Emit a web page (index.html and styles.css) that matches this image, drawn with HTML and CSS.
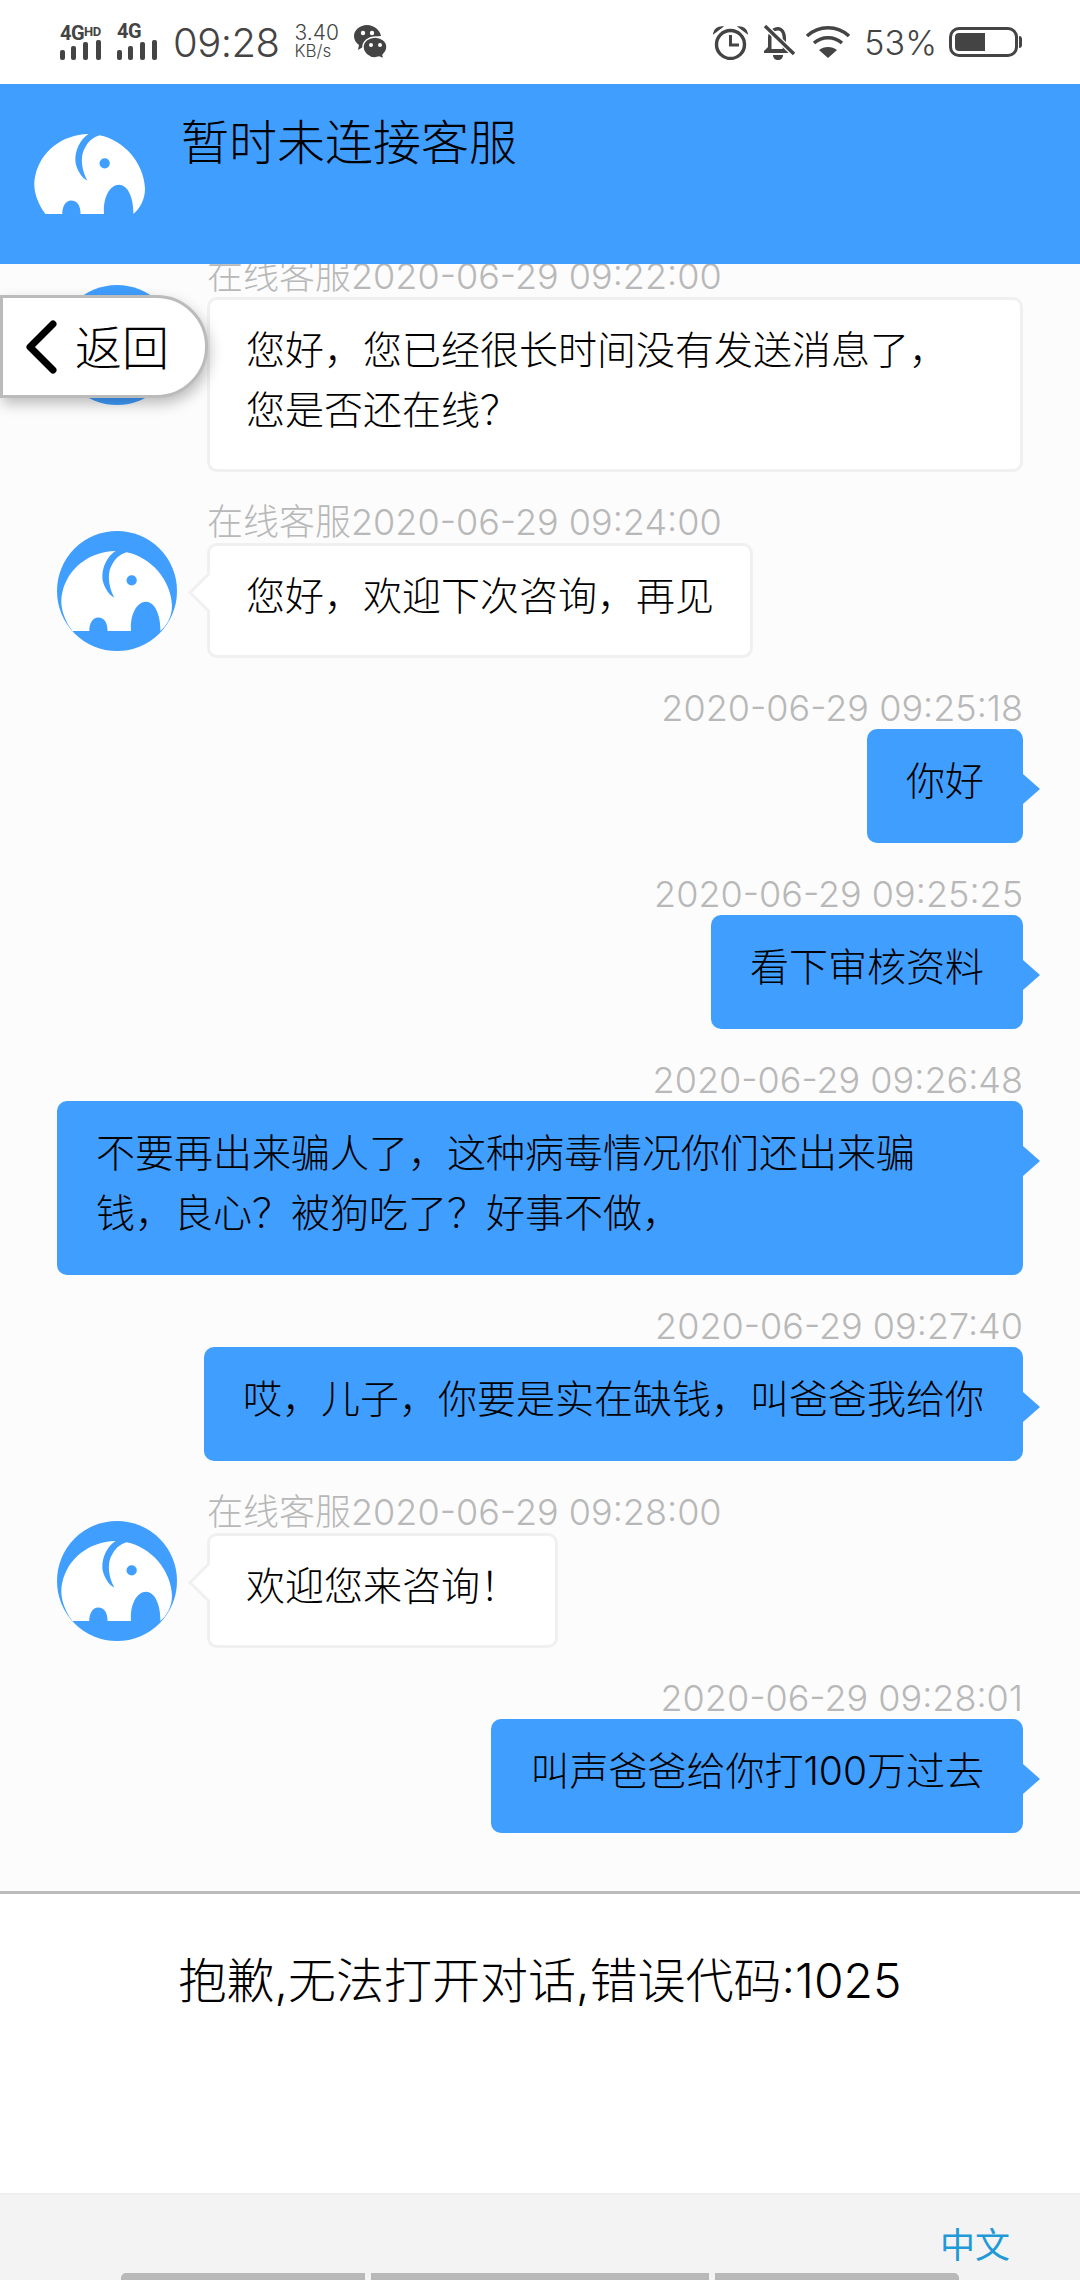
FILE: index.html
```html
<!DOCTYPE html>
<html lang="zh-CN">
<head>
  <meta charset="UTF-8" />
  <meta name="viewport" content="width=device-width, initial-scale=1.0"/>
  <title>暂时未连接客服</title>
  <link rel="stylesheet" href="styles.css">
</head>
<body>
  <svg class="defs" width="0" height="0">
    <symbol id="elephant" viewBox="100 403 322 237" preserveAspectRatio="none">
      <path fill-rule="evenodd" d="M133 640C105 600 95 560 104 525C120 455 180 405 258 403C225 425 215 470 222 495C228 515 240 535 255 541C240 515 230 470 250 440C262 420 275 412 290 407C360 420 420 490 422 565C422 600 405 625 388 640C390 600 375 553 347 553C320 553 300 590 303 640L235 640C235 615 225 600 208 600C190 600 182 620 182 640ZM305 475A15 15 0 1 0 305 505A15 15 0 1 0 305 475Z"/>
    </symbol>
    <symbol id="avatar" viewBox="0 0 120 120">
      <circle cx="60" cy="60" r="60" fill="#409eff"/>
      <clipPath id="avatar-clip"><circle cx="60" cy="60" r="60"/></clipPath>
      <g clip-path="url(#avatar-clip)">
        <use href="#elephant" x="4" y="20" width="111" height="80" fill="#fff"/>
      </g>
    </symbol>
  </svg>

  <!-- Status bar -->
  <div class="statusbar">
    <div class="status-left">
      <div class="signal">
        <div class="net">4G<span class="hd">HD</span></div>
        <svg class="bars" width="42" height="20" viewBox="0 0 42 20" fill="#444"><rect x="0" y="10" width="5" height="10" rx="2"/><rect x="11" y="6" width="5" height="14" rx="2"/><rect x="23" y="2" width="5" height="18" rx="2"/><rect x="36" y="0" width="5" height="20" rx="2"/></svg>
      </div>
      <div class="signal signal-two">
        <div class="net">4G</div>
        <svg class="bars" width="42" height="20" viewBox="0 0 42 20" fill="#444"><rect x="0" y="10" width="5" height="10" rx="2"/><rect x="11" y="6" width="5" height="14" rx="2"/><rect x="23" y="2" width="5" height="18" rx="2"/><rect x="35" y="0" width="5" height="20" rx="2"/></svg>
      </div>
      <div class="clock">09:28</div>
      <div class="speed"><div class="speed-num">3.40</div><div class="speed-unit">KB/s</div></div>
      <svg class="wechat" width="33" height="34" viewBox="0 0 33 34" fill="#444">
        <path d="M13 0C6 0 0 5 0 11C0 15 2 18 5 20L4 25L9 22C10 22 11 23 13 23C13 16 19 11 27 11C26 5 20 0 13 0Z"/>
        <path d="M21 12C27 12 33 16 33 22C33 25 31 28 29 30L30 34L25 32C24 32 22 33 21 33C15 33 9 28 9 22C9 16 15 12 21 12Z" stroke="#fff" stroke-width="1.5"/>
        <circle cx="9" cy="8" r="2.2" fill="#fff"/><circle cx="18" cy="8" r="2.2" fill="#fff"/>
        <circle cx="17" cy="20" r="2" fill="#fff"/><circle cx="26" cy="20" r="2" fill="#fff"/>
      </svg>
    </div>
    <div class="status-right">
      <svg class="alarm" width="35" height="35" viewBox="0 0 35 35" fill="none" stroke="#444" stroke-width="3.4">
        <circle cx="17.5" cy="19.5" r="14"/>
        <path d="M17.5 10V20H26" stroke-width="3"/>
        <path d="M1 8C2 4 5 2 9 2L1 8ZM34 8C33 4 30 2 26 2L34 8Z" fill="#444" stroke-width="1.5"/>
      </svg>
      <svg class="belloff" width="32" height="35" viewBox="0 0 32 35" fill="#444">
        <path fill-rule="evenodd" d="M15 2C9 2 5 7 5 13V22L1 26V28H27L23 22V13C23 7 20 2 15 2ZM15 5.5C18 5.500 19.700 9 19.700 13V24H8.500V13C8.500 9 11 5.500 15 5.500Z"/>
        <path d="M10 30H20C20 33 18 35 15 35C12 35 10 33 10 30Z"/>
        <path d="M2 1L31 29" stroke="#fff" stroke-width="6"/>
        <path d="M2 1L31 29" stroke="#444" stroke-width="3.400"/>
      </svg>
      <svg class="wifi" width="46" height="34" viewBox="0 0 46 34" fill="none" stroke="#444" stroke-width="3.600">
        <path d="M2 11C14 0 32 0 44 11"/>
        <path d="M9 18C17 11 29 11 37 18"/>
        <path d="M23 33L14 25C19 21 27 21 32 25Z" fill="#444" stroke="none"/>
      </svg>
      <div class="percent">53%</div>
      <div class="battery"><div class="battery-fill"></div></div>
    </div>
  </div>

  <!-- Header -->
  <div class="header">
    <svg class="header-logo" width="111" height="80"><use href="#elephant" fill="#fff"/></svg>
    <div class="header-title">暂时未连接客服</div>
  </div>

  <!-- Chat -->
  <div class="chat-wrap">
    <div class="back">
      <svg class="back-arrow" width="34" height="56" viewBox="0 0 34 56" fill="none" stroke="#000" stroke-width="7" stroke-linecap="round" stroke-linejoin="round"><path d="M29 5L6 28L29 51"/></svg>
      <span>返回</span>
    </div>

    <div class="chat">
      <div class="msg">
        <svg class="avatar" width="120" height="120"><use href="#avatar"/></svg>
        <div class="msg-body">
          <div class="time">在线客服2020-06-29 09:22:00</div>
          <div class="bubble bubble-full no-tail">您好，您已经很长时间没有发送消息了，<br>您是否还在线？</div>
        </div>
      </div>

      <div class="msg">
        <svg class="avatar" width="120" height="120"><use href="#avatar"/></svg>
        <div class="msg-body">
          <div class="time">在线客服2020-06-29 09:24:00</div>
          <div class="bubble">您好，欢迎下次咨询，再见</div>
        </div>
      </div>

      <div class="msg mine">
        <div class="time">2020-06-29 09:25:18</div>
        <div class="bubble">你好</div>
      </div>

      <div class="msg mine">
        <div class="time">2020-06-29 09:25:25</div>
        <div class="bubble">看下审核资料</div>
      </div>

      <div class="msg mine">
        <div class="time">2020-06-29 09:26:48</div>
        <div class="bubble bubble-wide">不要再出来骗人了，这种病毒情况你们还出来骗<br>钱，良心？被狗吃了？好事不做，</div>
      </div>

      <div class="msg mine">
        <div class="time">2020-06-29 09:27:40</div>
        <div class="bubble">哎，儿子，你要是实在缺钱，叫爸爸我给你</div>
      </div>

      <div class="msg">
        <svg class="avatar" width="120" height="120"><use href="#avatar"/></svg>
        <div class="msg-body">
          <div class="time">在线客服2020-06-29 09:28:00</div>
          <div class="bubble">欢迎您来咨询！</div>
        </div>
      </div>

      <div class="msg mine">
        <div class="time">2020-06-29 09:28:01</div>
        <div class="bubble">叫声爸爸给你打100万过去</div>
      </div>
    </div>
  </div>

  <!-- Input area -->
  <div class="notice">抱歉,无法打开对话,错误代码:1025</div>

  <!-- Footer -->
  <div class="footer">
    <a class="lang" href="#">中文</a>
    <div class="footer-bars">
      <div class="fbar fbar-first"></div>
      <div class="fbar fbar-mid"></div>
      <div class="fbar fbar-last"></div>
    </div>
  </div>
</body>
</html>
```

FILE: styles.css
```css
* {
  margin: 0;
  padding: 0;
  box-sizing: border-box;
}

body {
  width: 1080px;
  height: 2280px;
  display: flex;
  flex-direction: column;
  overflow: hidden;
  background-color: #fff;
  color: #000;
  font-family: "Noto Sans CJK SC", "Noto Sans", sans-serif;
  font-weight: 300;
}

.defs {
  position: absolute;
}

/* Status bar */
.statusbar {
  height: 84px;
  flex: none;
  display: flex;
  justify-content: space-between;
  align-items: center;
  padding: 0 59px 0 60px;
  background-color: #fff;
  color: #444;
  font-family: Inter, Roboto, sans-serif;
}

.status-left,
.status-right {
  display: flex;
  align-items: center;
}

.signal {
  width: 43px;
  margin-top: -1px;
}

.signal-two {
  margin-left: 14px;
}

.net {
  height: 15px;
  font-family: Roboto, sans-serif;
  font-size: 20px;
  font-weight: 700;
  line-height: 15px;
  letter-spacing: -0.5px;
  white-space: nowrap;
}

.hd {
  font-size: 13px;
  vertical-align: 4px;
}

.bars {
  display: block;
  margin-top: 1px;
}

.clock {
  margin-left: 13px;
  font-size: 40px;
  font-weight: 300;
  letter-spacing: -0.5px;
}

.speed {
  margin-left: 15px;
  font-family: Inter, Roboto, sans-serif;
  line-height: 18px;
}

.speed-num {
  font-size: 21px;
}

.speed-unit {
  font-size: 17px;
}

.wechat {
  margin-left: 15px;
}

.belloff {
  margin-left: 15px;
}

.wifi {
  margin-left: 10px;
}

.percent {
  margin-left: 13px;
  font-size: 34px;
  font-weight: 300;
}

.battery {
  position: relative;
  width: 69px;
  height: 30px;
  margin-left: 12px;
  margin-right: 3px;
  padding: 4px;
  border: 3px solid #444;
  border-radius: 10px;
}

.battery::after {
  content: "";
  position: absolute;
  right: -7px;
  top: 6px;
  width: 3px;
  height: 12px;
  background-color: #444;
  border-radius: 0 3px 3px 0;
}

.battery-fill {
  width: 30px;
  height: 100%;
  margin: -1px 0 0 -1px;
  padding-bottom: 2px;
  box-sizing: content-box;
  background-color: #444;
  border-radius: 4px 0 0 4px;
}

/* Header */
.header {
  height: 180px;
  flex: none;
  display: flex;
  align-items: flex-start;
  padding-left: 34px;
  background-color: #409eff;
}

.header-logo {
  margin-top: 50px;
}

.header-title {
  margin: 25px 0 0 36px;
  font-size: 48px;
  line-height: 60px;
}

/* Chat */
.chat-wrap {
  position: relative;
  height: 1627px;
  flex: none;
  overflow: hidden;
  background-color: #fcfcfc;
}

.back {
  position: absolute;
  left: 0;
  top: 31px;
  z-index: 10;
  width: 208px;
  height: 103px;
  display: flex;
  align-items: center;
  gap: 17px;
  padding-left: 21px;
  background-color: #fff;
  border: 3px solid #bbb;
  border-radius: 0 52px 52px 0;
  box-shadow: 2px 6px 14px rgba(0, 0, 0, 0.25);
  font-size: 47px;
}

.back span {
  padding-bottom: 5px;
}

.chat {
  height: 100%;
  display: flex;
  flex-direction: column;
  justify-content: flex-end;
  padding: 0 57px 58px;
}

.msg {
  position: relative;
  flex: none;
  display: flex;
  margin-top: 31px;
  margin-bottom: -1px;
}

.msg.mine {
  flex-direction: column;
  align-items: flex-end;
  margin-bottom: 0;
}

.avatar {
  flex: none;
  margin-top: 29px;
}

.msg-body {
  flex: 1;
  display: flex;
  flex-direction: column;
  align-items: flex-start;
  margin-left: 30px;
}

.time {
  height: 41px;
  font-family: Inter, Roboto, "Noto Sans CJK SC", sans-serif;
  font-size: 36px;
  font-weight: 300;
  line-height: 41px;
  color: #b8b8b8;
  white-space: nowrap;
}

.bubble {
  position: relative;
  padding: 20px 36px 29px;
  background-color: #fff;
  border: 3px solid #f0f0f0;
  border-radius: 10px;
  font-family: Inter, "Noto Sans CJK SC", sans-serif;
  font-size: 39px;
  line-height: 60px;
}

/* tail, a rotated square with two borders */
.bubble::before {
  content: "";
  position: absolute;
  left: -16px;
  top: 32px;
  width: 26px;
  height: 26px;
  background-color: #fff;
  border-left: 3px solid #f0f0f0;
  border-bottom: 3px solid #f0f0f0;
  transform: rotate(45deg);
}

.no-tail::before {
  display: none;
}

.bubble-full {
  align-self: stretch;
}

.mine .bubble {
  padding: 22px 39px 32px;
  background-color: #409eff;
  border: none;
}

.mine .bubble::before {
  display: none;
}

.mine .bubble::after {
  content: "";
  position: absolute;
  right: -17px;
  top: 45px;
  border-left: 17px solid #409eff;
  border-top: 15px solid transparent;
  border-bottom: 15px solid transparent;
}

.bubble-wide {
  align-self: stretch;
}

/* Notice */
.notice {
  height: 302px;
  flex: none;
  padding-top: 57px;
  background-color: #fff;
  border-top: 3px solid #bbb;
  font-family: Inter, "Noto Sans CJK SC", sans-serif;
  font-size: 48px;
  line-height: 60px;
  text-align: center;
}

/* Footer */
.footer {
  flex: 1;
  display: flex;
  flex-direction: column;
  justify-content: space-between;
  background-color: #f3f3f3;
  border-top: 2px solid #eee;
}

.lang {
  align-self: flex-end;
  margin: 26px 70px 0 0;
  font-size: 35px;
  font-weight: 400;
  line-height: 44px;
  color: #1f9ad6;
  text-decoration: none;
}

.footer-bars {
  display: flex;
  gap: 6px;
  margin-left: 121px;
}

.fbar {
  height: 7px;
  background-color: #b9b9b9;
}

.fbar-first {
  width: 244px;
  border-radius: 5px 0 0 0;
}

.fbar-mid {
  width: 338px;
}

.fbar-last {
  width: 244px;
  border-radius: 0 5px 0 0;
}
```
